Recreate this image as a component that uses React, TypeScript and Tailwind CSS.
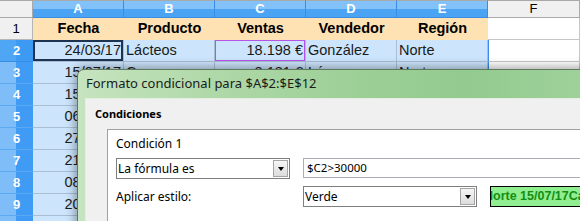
import React from "react";

const cols = ["A", "B", "C", "D", "E"];
const heads = ["Fecha", "Producto", "Ventas", "Vendedor", "Región"];
const rows: string[][] = [
  ["24/03/17", "Lácteos", "18.198 €", "González", "Norte"],
  ["15/07/17", "Carnes", "8.181 €", "López", "Norte"],
  ["15/05/17", "Bebidas", "12.450 €", "Martínez", "Sur"],
  ["06/06/17", "Lácteos", "31.200 €", "González", "Norte"],
  ["27/02/17", "Carnes", "9.870 €", "López", "Este"],
  ["21/04/17", "Frutas", "22.315 €", "Pérez", "Oeste"],
  ["08/01/17", "Bebidas", "35.010 €", "Martínez", "Sur"],
  ["20/03/17", "Frutas", "14.760 €", "Pérez", "Oeste"],
  ["12/02/17", "Lácteos", "27.300 €", "González", "Norte"],
];

function Dropdown({ text }: { text: string }) {
  return (
    <div className="flex h-[21px] items-center border border-[#7f7f7f] bg-white">
      <span className="flex-1 pl-[1px] text-[12px] leading-[16px] text-black">{text}</span>
      <div className="mr-[1px] flex h-[17px] w-[15px] items-center justify-center border border-[#a5a5a5] bg-[linear-gradient(#f6f6f6,#dcdcdc)]">
        <div className="h-0 w-0 border-l-[3.5px] border-r-[3.5px] border-t-[4px] border-l-transparent border-r-transparent border-t-black" />
      </div>
    </div>
  );
}

function Sheet() {
  return (
    <div className="grid grid-cols-[33px_repeat(5,91px)_92px] grid-rows-[18px_repeat(10,22px)] font-['Liberation_Sans',Arial,sans-serif] text-[14.5px]">
      <div className="border-b border-r border-t border-[#a9a9a9] bg-[#f0f0f0]" />
      {cols.map((c) => (
        <div
          key={c}
          className="flex items-center justify-center border-r border-t border-b border-r-[#3b8de4] border-t-[#a9a9a9] border-b-[#3b8de4] bg-[linear-gradient(to_bottom,#83c1f9_0%,#83c1f9_50%,#4ba3f4_50%,#4ba3f4_100%)] text-[13px] font-bold text-white"
        >
          {c}
        </div>
      ))}
      <div className="flex items-center justify-center border-b border-r border-t border-[#a9a9a9] bg-[#f0f0f0] text-[13px] text-black">
        F
      </div>

      <div className="flex items-center justify-center border-b border-r border-[#b5b5b5] bg-[#f0f0f0] text-[13px] text-black">
        1
      </div>
      {heads.map((h) => (
        <div key={h} className="flex items-center justify-center bg-[#ffe2b4] font-bold text-black">
          {h}
        </div>
      ))}
      <div className="border-b border-r border-[#c6c6c6] bg-white" />

      {rows.map((r, i) => (
        <React.Fragment key={i}>
          <div
            className={
              i === 0
                ? "flex items-center justify-center border-b border-[#3a8be2] bg-[linear-gradient(to_right,#4ea6f5_0%,#4ea6f5_48%,#3d9af3_48%,#3d9af3_100%)] text-[13px] font-bold text-white"
                : "flex items-center justify-center border-b border-[#5aa9f2] bg-[linear-gradient(to_right,#7fbdf8_0%,#7fbdf8_48%,#3f9bf3_48%,#3f9bf3_100%)] text-[13px] font-bold text-white"
            }
          >
            {i + 2}
          </div>
          {r.map((v, j) => (
            <div
              key={j}
              className={
                i === 0 && j === 0
                  ? "flex items-center justify-end overflow-hidden whitespace-nowrap border-b border-r border-[#a9bdd3] bg-[#cce5fc] pr-[2px] text-[#1a1a1a] shadow-[inset_0_0_0_2px_#1c3452]"
                  : i === 0 && j === 2
                  ? "flex items-center justify-end overflow-hidden whitespace-nowrap border-b border-r border-[#a9bdd3] bg-[#cce5fc] pr-[2px] text-[#1a1a1a] shadow-[inset_0_0_0_1px_#b455e8]"
                  : j === 0 || j === 2
                  ? "flex items-center justify-end overflow-hidden whitespace-nowrap border-b border-r border-[#a9bdd3] bg-[#cce5fc] pr-[2px] text-[#1a1a1a]"
                  : "flex items-center justify-start overflow-hidden whitespace-nowrap border-b border-r border-[#a9bdd3] bg-[#cce5fc] pl-[2px] text-[#1a1a1a]"
              }
            >
              {v}
            </div>
          ))}
          <div className="border-b border-l border-r border-b-[#c6c6c6] border-l-[#3b8be6] border-r-[#c6c6c6] bg-white" />
        </React.Fragment>
      ))}
    </div>
  );
}

function Dialog() {
  return (
    <div className="absolute left-[77px] top-[69px] h-[170px] w-[520px] rounded-tl-[7px] border border-[#5d7a5c] bg-[linear-gradient(90deg,#c6e4bf_0%,#b0d9a9_25%,#9ccf96_55%,#93ca8f_75%,#a0d29b_100%)] font-['Noto_Sans',sans-serif] shadow-[0_0_9px_3px_rgba(0,0,0,0.3)]">
      <div className="flex h-[28px] items-center pl-[8px] text-[13px] text-[#1b1b1b]">
        Formato condicional para $A$2:$E$12
      </div>
      <div className="ml-[7px] h-[141px] border-l border-t border-[#e4efe2] bg-[#f0f0f0]">
        <div className="pl-[9px] pt-[7px] text-[11px] font-bold leading-[16px] text-black">Condiciones</div>
        <div className="ml-[21px] mt-[7px] h-[100px] border-l border-t border-[#a0a0a0] bg-white pl-[8px] pt-[6px]">
          <div className="text-[12px] leading-[16px] text-black">Condición 1</div>
          <div className="mt-[6px] grid grid-cols-[174px_174px_1fr] gap-x-[13px] gap-y-[7px]">
            <Dropdown text="La fórmula es" />
            <div className="col-span-2 flex h-[20px] items-center border border-[#abadb3] bg-white pl-[3px] text-[11.5px] text-black">
              $C2&gt;30000
            </div>
            <div className="flex h-[21px] items-center text-[12px] text-black">Aplicar estilo:</div>
            <Dropdown text="Verde" />
            <div className="flex h-[21px] items-center overflow-hidden whitespace-nowrap border border-black bg-[#90ee90]">
              <span className="-ml-[7px] font-['Liberation_Sans',Arial,sans-serif] text-[12.5px] font-bold text-[#138e13]">
                Norte 15/07/17Carnes
              </span>
            </div>
          </div>
        </div>
      </div>
    </div>
  );
}

export default function App() {
  return (
    <div className="relative h-[221px] w-[580px] overflow-hidden bg-white">
      <Sheet />
      <Dialog />
    </div>
  );
}
